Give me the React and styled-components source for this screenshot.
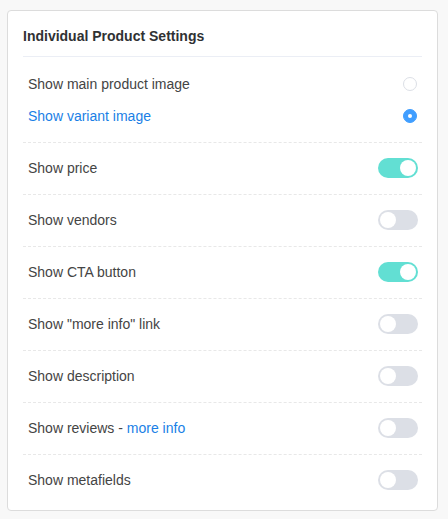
import React, { useState } from "react";
import styled, { createGlobalStyle } from "styled-components";

const Global = createGlobalStyle`
  html, body { margin: 0; padding: 0; background: #f8f8f8; }
  body { font-family: "Liberation Sans", Arial, sans-serif; }
  * { box-sizing: border-box; }
`;

const Page = styled.div`
  padding: 10px 10px 8px 7px;
`;

const Card = styled.div`
  width: 431px;
  background: #fff;
  border: 1px solid #dcdcdc;
  border-radius: 4px;
  padding: 15px 15px 4px;
`;

const Header = styled.div`
  height: 31px;
  border-bottom: 1px solid #ebeef5;
  font-size: 14px;
  font-weight: bold;
  color: #303133;
  line-height: 21px;
`;

const RadioGroup = styled.div`
  padding: 11px 0 10px;
  border-bottom: 1px dashed #e8e8e8;
`;

const RadioRow = styled.label`
  display: flex;
  align-items: center;
  justify-content: space-between;
  height: 32px;
  padding: 0 5px;
  font-size: 14px;
  color: ${(p) => (p.$active ? "#1a7fe6" : "#444")};
  cursor: pointer;
`;

const RadioDot = styled.span`
  width: 14px;
  height: 14px;
  margin-right: 0;
  border-radius: 50%;
  border: 1px solid ${(p) => (p.$checked ? "#409eff" : "#dcdfe6")};
  background: ${(p) => (p.$checked ? "#409eff" : "#fff")};
  display: flex;
  align-items: center;
  justify-content: center;
  &::after {
    content: "";
    width: 4px;
    height: 4px;
    border-radius: 50%;
    background: #fff;
    display: ${(p) => (p.$checked ? "block" : "none")};
  }
`;

const ToggleRow = styled.div`
  display: flex;
  align-items: center;
  justify-content: space-between;
  height: 52px;
  padding: 0 4px 1px 5px;
  font-size: 14px;
  color: #444;
  border-bottom: 1px dashed #e8e8e8;
  &:last-child { border-bottom: none; height: 51px; }
`;

const Link = styled.a`
  color: #1a7fe6;
  text-decoration: none;
`;

const Switch = styled.button`
  position: relative;
  width: 40px;
  height: 20px;
  border: none;
  padding: 0;
  border-radius: 10px;
  background: ${(p) => (p.$on ? "#62dfd3" : "#dcdfe6")};
  cursor: pointer;
  &::after {
    content: "";
    position: absolute;
    top: 2px;
    left: ${(p) => (p.$on ? "22px" : "2px")};
    width: 16px;
    height: 16px;
    border-radius: 50%;
    background: #fff;
  }
`;

const rows = [
  { label: "Show price", on: true },
  { label: "Show vendors", on: false },
  { label: "Show CTA button", on: true },
  { label: 'Show "more info" link', on: false },
  { label: "Show description", on: false },
  { label: "Show reviews", link: "more info", on: false },
  { label: "Show metafields", on: false },
];

export default function App() {
  const [img, setImg] = useState("variant");
  const [state, setState] = useState(rows.map((r) => r.on));
  return (
    <Page>
      <Global />
      <Card>
        <Header>Individual Product Settings</Header>
        <RadioGroup>
          <RadioRow $active={img === "main"} onClick={() => setImg("main")}>
            Show main product image
            <RadioDot $checked={img === "main"} />
          </RadioRow>
          <RadioRow $active={img === "variant"} onClick={() => setImg("variant")}>
            Show variant image
            <RadioDot $checked={img === "variant"} />
          </RadioRow>
        </RadioGroup>
        {rows.map((r, i) => (
          <ToggleRow key={r.label}>
            <span>
              {r.label}
              {r.link && (
                <>
                  {" - "}
                  <Link href="#">{r.link}</Link>
                </>
              )}
            </span>
            <Switch
              $on={state[i]}
              onClick={() => setState((s) => s.map((v, j) => (j === i ? !v : v)))}
            />
          </ToggleRow>
        ))}
      </Card>
    </Page>
  );
}
